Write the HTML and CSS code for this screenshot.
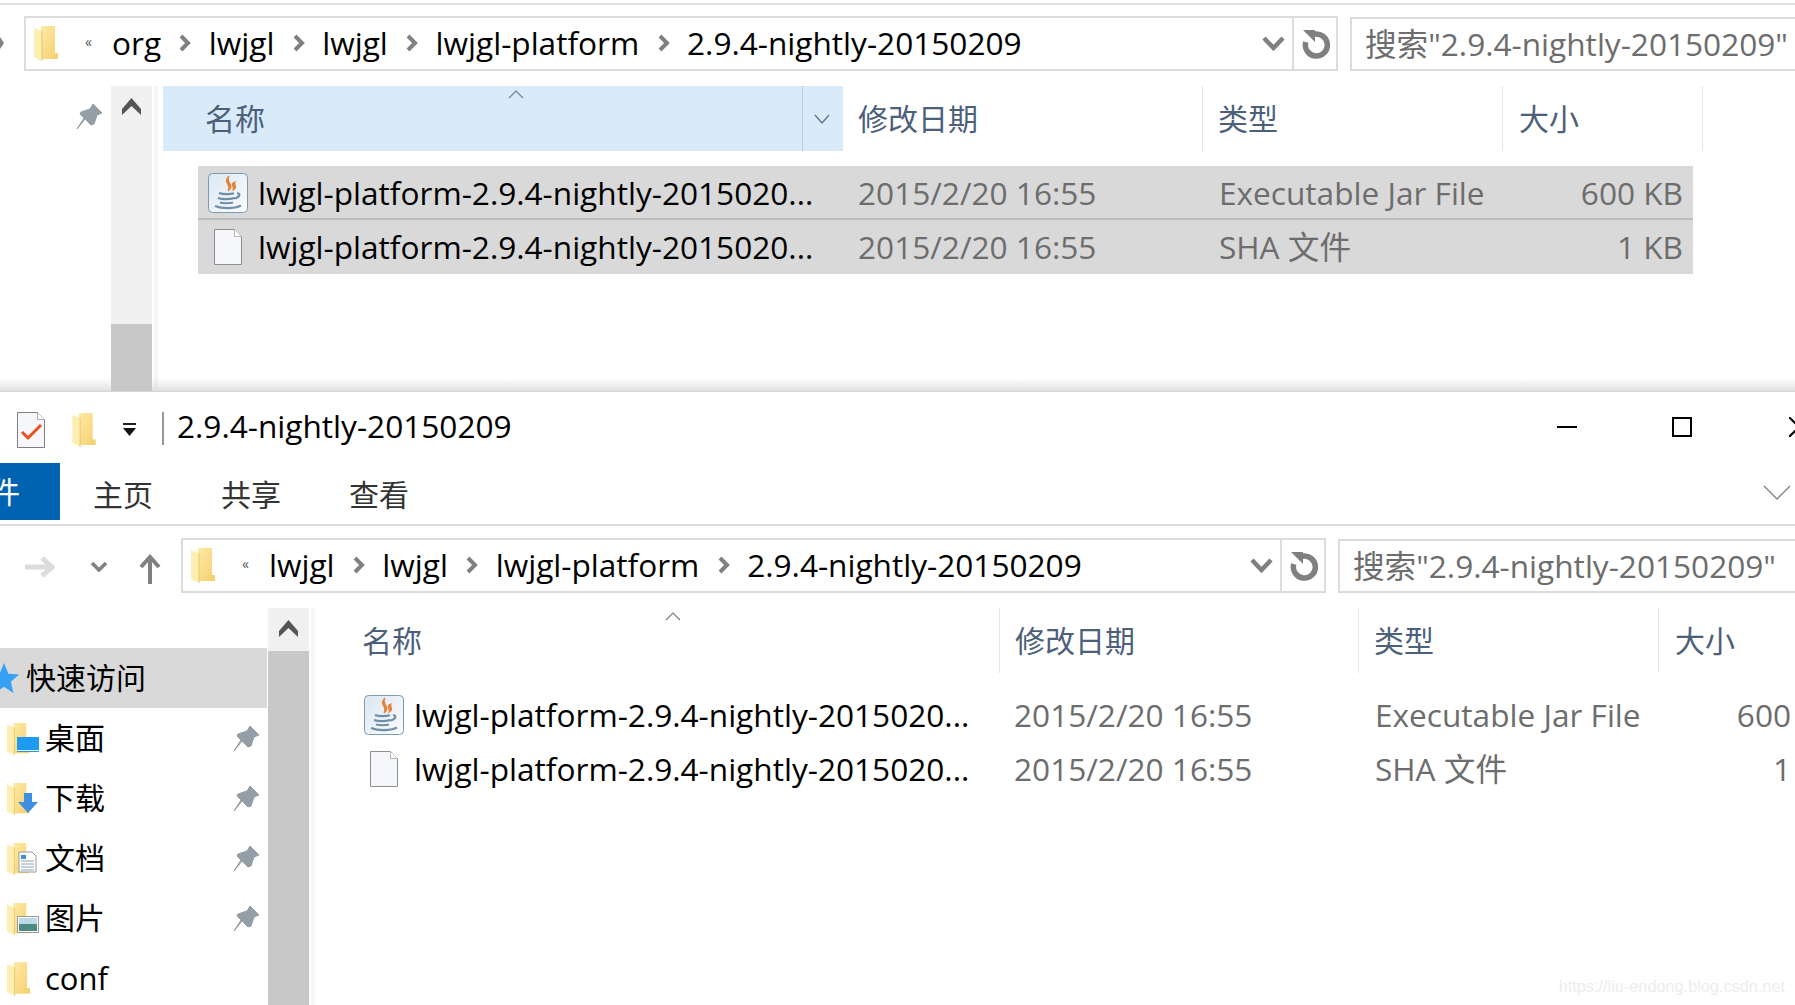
FILE: index.html
```html
<!DOCTYPE html>
<html lang="zh">
<head>
<meta charset="utf-8">
<title>2.9.4-nightly-20150209</title>
<link rel="stylesheet" href="styles.css">
</head>
<body>
<svg class="defs" width="0" height="0" aria-hidden="true">
  <defs>
    <linearGradient id="fg" x1="0" y1="0" x2="1" y2="1"><stop offset="0" stop-color="#ffe9a6"/><stop offset="1" stop-color="#f4d06f"/></linearGradient>
    <linearGradient id="jg" x1="0" y1="0" x2="1" y2="1"><stop offset="0" stop-color="#dbe7f2"/><stop offset="1" stop-color="#fbfcfe"/></linearGradient>
    <symbol id="folder" viewBox="0 0 24 35">
      <path d="M7 0h14v27h3v6H7z" fill="url(#fg)"/>
      <path d="M0 2l8 3v30l-8-4z" fill="#fdeeb2"/>
      <path d="M8 5v30" stroke="#e9c866" stroke-width="1"/>
    </symbol>
    <symbol id="pin" viewBox="0 0 26 26">
      <path d="M17 0l9 9-5 2-3 9-3 1-6-6-8 10 7-11-4-4 1-2 9-3z" fill="#939ea6" stroke="#939ea6" stroke-width="1"/>
    </symbol>
    <symbol id="crumb" viewBox="0 0 13 18">
      <path d="M3 2l7 7-7 7" fill="none" stroke="#808080" stroke-width="4"/>
    </symbol>
    <symbol id="drop" viewBox="0 0 23 15">
      <path d="M2 2l9.500 10L21 2" fill="none" stroke="#808080" stroke-width="4.500"/>
    </symbol>
    <symbol id="refresh" viewBox="0 0 29 30">
      <path d="M12 5.300A11 11 0 1 1 3.800 13" fill="none" stroke="#808080" stroke-width="5.500"/>
      <path d="M1 1h12v12z" fill="#808080"/>
    </symbol>
    <symbol id="scrollup" viewBox="0 0 19 17">
      <path d="M9.500 0L19 11v6l-9.500-9L0 17v-6z" fill="#555"/>
    </symbol>
    <symbol id="java" viewBox="0 0 40 40">
      <rect x=".5" y=".5" width="39" height="39" rx="4" fill="url(#jg)" stroke="#7f99ae"/>
      <path d="M21 3c-7 7 3 8-1 15 8-6-3-8 1-15zM27 9c-6 2 0 5-2 8 6-3 0-5 2-8z" fill="#e4843a" stroke="#e4843a" stroke-width="1.200"/>
      <path d="M11 20c4 1.500 11 1.500 15 .3M29 20.500c4-.8 3 4-3 5M10 25c4 1.500 12 1.500 16 0M12 29.500c3 1 10 1 13 0M7 33c7 3 19 3 26-.5" fill="none" stroke="#6f8fa8" stroke-width="2.200"/>
    </symbol>
    <symbol id="doc" viewBox="0 0 28 36">
      <path d="M.5.5h20l7 7v28H.5z" fill="#f5f7fa" stroke="#8e8e8e"/>
      <path d="M20.500.5v7h7" fill="#fff" stroke="#b5b5b5"/>
    </symbol>
  </defs>
</svg>

<section class="win win-top">
  <div class="topline"></div>
  <svg class="cut-arrow" viewBox="0 0 5 14"><path d="M0 1l4 6-4 6z" fill="#808080"/></svg>
  <div class="pathrow pathrow-top">
    <div class="addr addr-top">
      <svg class="ic-folder"><use href="#folder"/></svg>
      <span class="quote">«</span>
      <span class="seg seg-org">org</span><svg class="crumb"><use href="#crumb"/></svg>
      <span class="seg seg-l1">lwjgl</span><svg class="crumb"><use href="#crumb"/></svg>
      <span class="seg seg-l2">lwjgl</span><svg class="crumb"><use href="#crumb"/></svg>
      <span class="seg seg-lp">lwjgl-platform</span><svg class="crumb"><use href="#crumb"/></svg>
      <span class="seg">2.9.4-nightly-20150209</span>
      <svg class="drop"><use href="#drop"/></svg>
      <div class="refresh"><svg><use href="#refresh"/></svg></div>
    </div>
    <div class="search">搜索"2.9.4-nightly-20150209"</div>
  </div>
  <div class="pane pane-top">
    <div class="pincol"><svg class="pin"><use href="#pin"/></svg></div>
    <div class="scroll scroll-top"><svg class="scrollup"><use href="#scrollup"/></svg><div class="thumb"></div></div>
    <div class="edge"></div>
    <div class="list list-top">
      <div class="hdr">
        <div class="hc hc-name hot"><span>名称</span><svg class="caret" viewBox="0 0 16 9"><path d="M1 8l7-7 7 7" fill="none" stroke="#6f7f8f" stroke-width="1.200"/></svg></div>
        <div class="hc hc-drop hot"><svg class="hdrop" viewBox="0 0 16 10"><path d="M1 1l7 8 7-8" fill="none" stroke="#5f7286" stroke-width="1.200"/></svg></div>
        <div class="hc hc-date"><span>修改日期</span></div>
        <div class="hc hc-type"><span>类型</span></div>
        <div class="hc hc-size"><span>大小</span></div>
      </div>
      <div class="rows sel">
        <div class="row"><div class="r-name"><span class="r-ic"><svg class="java"><use href="#java"/></svg></span>lwjgl-platform-2.9.4-nightly-2015020...</div><div class="r-date">2015/2/20 16:55</div><div class="r-type">Executable Jar File</div><div class="r-size">600 KB</div></div>
        <div class="row"><div class="r-name"><span class="r-ic"><svg class="doc"><use href="#doc"/></svg></span>lwjgl-platform-2.9.4-nightly-2015020...</div><div class="r-date">2015/2/20 16:55</div><div class="r-type">SHA 文件</div><div class="r-size">1 KB</div></div>
      </div>
    </div>
  </div>
  <div class="shade"></div>
</section>

<section class="win win-bot">
  <div class="titlebar">
    <svg class="qa-check" viewBox="0 0 28 36"><path d="M.5.5h20l7 7v28H.5z" fill="#f5f7fa" stroke="#808080"/><path d="M20.500.5v7h7" fill="#fff" stroke="#aaa"/><path d="M5 20l6 6L24 13" fill="none" stroke="#e8501e" stroke-width="3"/></svg>
    <svg class="qa-folder"><use href="#folder"/></svg>
    <svg class="qa-drop" viewBox="0 0 13 13"><path d="M0 0h13v2H0z" fill="#222"/><path d="M0 5h13l-6.500 8z" fill="#111"/></svg>
    <div class="qa-sep"></div>
    <div class="title">2.9.4-nightly-20150209</div>
    <div class="winbtns">
      <div class="b-min"></div>
      <div class="b-max"></div>
      <svg class="b-close" viewBox="0 0 20 20"><path d="M0 0l20 20M20 0L0 20" stroke="#000" stroke-width="2"/></svg>
    </div>
  </div>
  <div class="ribbon">
    <div class="tab-file"><span>文件</span></div>
    <div class="tab">主页</div>
    <div class="tab">共享</div>
    <div class="tab">查看</div>
    <svg class="rib-chev" viewBox="0 0 28 15"><path d="M1 1l13 13L27 1" fill="none" stroke="#8a8a8a" stroke-width="1.500"/></svg>
  </div>
  <div class="pathrow pathrow-bot">
    <svg class="nav-back" viewBox="0 0 30 22"><path d="M0 11h26M17 2l10 9-10 9" fill="none" stroke="#dcdcdc" stroke-width="5"/></svg>
    <svg class="nav-down" viewBox="0 0 18 11"><path d="M2 2l7 7 7-7" fill="none" stroke="#808080" stroke-width="3.500"/></svg>
    <svg class="nav-up" viewBox="0 0 22 30"><path d="M11 30V4M2 13l9-10 9 10" fill="none" stroke="#808080" stroke-width="4"/></svg>
    <div class="addr addr-bot">
      <svg class="ic-folder"><use href="#folder"/></svg>
      <span class="quote">«</span>
      <span class="seg seg-l1">lwjgl</span><svg class="crumb"><use href="#crumb"/></svg>
      <span class="seg seg-l2">lwjgl</span><svg class="crumb"><use href="#crumb"/></svg>
      <span class="seg seg-lp">lwjgl-platform</span><svg class="crumb"><use href="#crumb"/></svg>
      <span class="seg">2.9.4-nightly-20150209</span>
      <svg class="drop"><use href="#drop"/></svg>
      <div class="refresh"><svg><use href="#refresh"/></svg></div>
    </div>
    <div class="search">搜索"2.9.4-nightly-20150209"</div>
  </div>
  <div class="pane pane-bot">
    <nav class="side">
      <div class="nav-item quick"><svg class="star" viewBox="0 0 24 24"><path d="M12 0l3.500 8.500 8.500.7-6.500 5.800 2 9L12 19l-7.500 5 2-9L0 9.200l8.500-.7z" fill="#35a0f4"/></svg>快速访问</div>
      <div class="nav-item">
        <svg class="side-ic" viewBox="0 0 34 36"><use href="#folder" width="22" height="34" x="0" y="0"/><rect x="10" y="15" width="22" height="15" fill="#1e9bf0"/><rect x="10" y="28" width="22" height="1" fill="#fff"/></svg>
        <span class="nav-label">桌面</span><svg class="pin"><use href="#pin"/></svg>
      </div>
      <div class="nav-item">
        <svg class="side-ic" viewBox="0 0 34 36"><use href="#folder" width="22" height="34" x="0" y="0"/><path d="M17 11h8v9h6L21 31 11 20h6z" fill="#3e8fe0"/></svg>
        <span class="nav-label">下载</span><svg class="pin"><use href="#pin"/></svg>
      </div>
      <div class="nav-item">
        <svg class="side-ic" viewBox="0 0 34 36"><use href="#folder" width="22" height="34" x="0" y="0"/><path d="M12 10h13l4 4v16H12z" fill="#fff" stroke="#9a9a9a"/><path d="M14 13h5v4h-5z" fill="#3a8fd8"/><path d="M14 19h13M14 22h13M14 25h13M14 28h13" stroke="#8aa0b5"/></svg>
        <span class="nav-label">文档</span><svg class="pin"><use href="#pin"/></svg>
      </div>
      <div class="nav-item">
        <svg class="side-ic" viewBox="0 0 34 36"><use href="#folder" width="22" height="34" x="0" y="0"/><rect x="10.500" y="14.500" width="21" height="16" fill="#fff" stroke="#9a9a9a"/><rect x="12" y="16" width="18" height="6" fill="#bcd9ea"/><rect x="12" y="22" width="18" height="7" fill="#4d8a82"/></svg>
        <span class="nav-label">图片</span><svg class="pin"><use href="#pin"/></svg>
      </div>
      <div class="nav-item">
        <svg class="side-ic" viewBox="0 0 34 36"><use href="#folder" width="23" height="34" x="0" y="0"/></svg>
        <span class="nav-label nav-latin">conf</span>
      </div>
    </nav>
    <div class="scroll scroll-bot"><svg class="scrollup"><use href="#scrollup"/></svg><div class="thumb"></div></div>
    <div class="edge"></div>
    <div class="list list-bot">
      <div class="hdr">
        <div class="hc hc-name"><span>名称</span><svg class="caret" viewBox="0 0 16 9"><path d="M1 8l7-7 7 7" fill="none" stroke="#6f7f8f" stroke-width="1.200"/></svg></div>
        <div class="hc hc-date"><span>修改日期</span></div>
        <div class="hc hc-type"><span>类型</span></div>
        <div class="hc hc-size"><span>大小</span></div>
      </div>
      <div class="rows">
        <div class="row"><div class="r-name"><span class="r-ic"><svg class="java"><use href="#java"/></svg></span>lwjgl-platform-2.9.4-nightly-2015020...</div><div class="r-date">2015/2/20 16:55</div><div class="r-type">Executable Jar File</div><div class="r-size">600 KB</div></div>
        <div class="row"><div class="r-name"><span class="r-ic"><svg class="doc"><use href="#doc"/></svg></span>lwjgl-platform-2.9.4-nightly-2015020...</div><div class="r-date">2015/2/20 16:55</div><div class="r-type">SHA 文件</div><div class="r-size">1 KB</div></div>
      </div>
    </div>
  </div>
  <div class="watermark">https://liu-endong.blog.csdn.net</div>
</section>
</body>
</html>
```
FILE: styles.css
```css
* { box-sizing: border-box; }
html, body { margin: 0; padding: 0; }
body {
  width: 1795px;
  height: 1005px;
  overflow: hidden;
  background: #fff;
  font-family: "Open Sans", "Noto Sans CJK SC", sans-serif;
  font-size: 31.6px;
  color: #000;
}
svg { display: block; flex: none; }
.defs { position: absolute; }

.win { position: relative; overflow: hidden; background: #fff; }
.win-top { height: 392px; padding-top: 3px; }
.win-bot { height: 613px; }

.topline { height: 2px; background: #e0e0e0; }
.cut-arrow { position: absolute; left: 0; top: 36px; width: 5px; height: 14px; }

/* address + search */
.pathrow { display: flex; align-items: stretch; height: 55px; }
.pathrow-top { margin: 11px 0 0 24px; }
.pathrow-bot { margin-top: 12px; padding-left: 25px; align-items: center; }
.addr {
  display: flex;
  align-items: center;
  height: 55px;
  border: 2px solid #dcdcdc;
  white-space: nowrap;
  flex: none;
}
.addr-top { width: 1314px; padding-left: 8px; }
.addr-bot { width: 1145px; padding-left: 8px; }
.ic-folder { width: 24px; height: 35px; margin-right: 27px; }
.quote { width: 9px; font-size: 14px; line-height: 1; color: #555; margin-right: 18px; margin-top: -4px; }
.seg { line-height: 40px; margin-top: -2px; }
.crumb { width: 13px; height: 18px; margin-left: 17.400px; margin-right: 17.400px; margin-top: -2px; }
.drop { width: 23px; height: 15px; margin-left: auto; margin-right: 7px; }
.refresh {
  width: 44px;
  align-self: stretch;
  border-left: 2px solid #dcdcdc;
  display: flex;
  align-items: center;
  justify-content: center;
  padding-left: 2px;
}
.refresh svg { width: 29px; height: 30px; }
.search {
  flex: none;
  width: 500px;
  height: 54px;
  margin-left: 12px;
  margin-top: 1px;
  border: 2px solid #dcdcdc;
  border-right: 0;
  padding-left: 13px;
  line-height: 50px;
  color: #6d6d6d;
  white-space: nowrap;
}

/* panes */
.pane { display: flex; align-items: stretch; }
.pane-top { margin-top: 15px; height: 306px; }
.pane-bot { margin-top: 15px; height: 397px; }

.pincol { width: 111px; padding: 18px 0 0 76px; flex: none; }
.pin { width: 26px; height: 26px; }
.scroll { width: 41px; flex: none; background: #f0f0f0; display: flex; flex-direction: column; }
.scroll .scrollup { width: 19px; height: 17px; margin: 12px auto 0; }
.scroll .thumb { background: #c8c8c8; flex: 1; }
.scroll-top .thumb { margin-top: 209px; }
.scroll-bot .thumb { margin-top: 14px; }
.edge { width: 4px; flex: none; margin: 0 0 0 2px; background: #f6f6f6; }
.list-top { margin-left: 5px; --rowm: 35px; }
.list-bot { margin-left: 0; --rowm: 39px; }
.list { flex: none; }

/* column headers */
.hdr { display: flex; height: 65px; color: #4c607a; font-size: 30px; }
.hc {
  position: relative;
  display: flex;
  align-items: center;
  flex: none;
  border-right: 1px solid #e5e5e5;
  height: 100%;
  line-height: 40px;
}
.hc span { padding-top: 1px; }
.hot { background: #d9eaf8; border-right-color: #b9cfe0; }
.hc-drop { width: 40px; border-right: 0; justify-content: center; padding-right: 3px; }
.hdrop { width: 16px; height: 10px; }
.hc-date { width: 359px; padding-left: 15px; }
.hc-type { width: 300px; padding-left: 15px; }
.hc-size { width: 200px; padding-left: 16px; }
.list-top .hc-date { width: 360px; }
.list-top .hc-name { width: 640px; padding-left: 42px; }
.list-bot .hc-name { width: 685px; padding-left: 47px; }
.caret { position: absolute; top: 4px; width: 16px; height: 9px; }
.list-top .caret { left: 345px; }
.list-bot .caret { left: 350px; }

/* file rows */
.rows { margin: 15px 0 0 var(--rowm); width: 1495px; }
.row {
  display: flex;
  align-items: center;
  height: 54px;
  padding: 0 10px;
  white-space: nowrap;
  line-height: 40px;
}
.sel { background: #d9d9d9; }
.sel .row:first-child { box-shadow: inset 0 -2px #bcbcbc; }
.r-name { display: flex; align-items: center; width: 650px; flex: none; }
.r-ic { width: 40px; margin-right: 10px; display: flex; justify-content: center; flex: none; }
.java { width: 40px; height: 40px; }
.doc { width: 28px; height: 36px; }
.r-date { width: 361px; flex: none; color: #6d6d6d; }
.r-type { flex: 1; color: #6d6d6d; }
.r-size { color: #6d6d6d; text-align: right; }

.shade {
  position: absolute;
  left: 0;
  right: 0;
  bottom: 0;
  height: 14px;
  background: linear-gradient(rgba(200,200,200,0), rgba(200,200,200,.55));
  border-bottom: 1px solid #d6d6d6;
}

/* title bar */
.titlebar { display: flex; align-items: center; height: 71px; padding-left: 17px; }
.qa-check { width: 28px; height: 36px; margin-top: 4px; }
.qa-folder { width: 24px; height: 34px; margin-left: 27px; margin-top: 4px; }
.qa-drop { width: 13px; height: 13px; margin-left: 27px; margin-top: 4px; }
.qa-sep { width: 2px; height: 33px; background: #999; margin-left: 26px; margin-top: 2px; }
.title { margin-left: 13px; margin-top: -4px; white-space: nowrap; }
.winbtns { display: flex; align-items: center; margin-left: auto; margin-top: -2px; }
.b-min { width: 20px; height: 2px; background: #000; }
.b-max { width: 20px; height: 20px; border: 2px solid #000; margin-left: 95px; }
.b-close { width: 20px; height: 20px; margin-left: 97px; margin-right: -14px; }

/* ribbon */
.ribbon {
  display: flex;
  align-items: flex-start;
  height: 63px;
  border-bottom: 2px solid #dcdcdc;
  color: #333;
  font-size: 30px;
}
.tab-file {
  width: 60px;
  height: 57px;
  background: #0063b1;
  color: #fff;
  overflow: hidden;
  display: flex;
  justify-content: flex-end;
  line-height: 57px;
  white-space: nowrap;
  padding-right: 40px;
  flex: none;
}
.tab-file span { flex: none; }
.tab { width: 60px; margin-left: 33px; line-height: 63px; flex: none; }
.tab + .tab { margin-left: 68px; }
.rib-chev { width: 28px; height: 15px; margin: 22px 4px 0 auto; }

.nav-back { width: 30px; height: 22px; margin-top: 2px; }
.nav-down { width: 18px; height: 11px; margin-left: 35px; margin-top: 2px; }
.nav-up { width: 22px; height: 30px; margin-left: 31px; margin-top: 6px; }
.addr-bot { margin-left: 20px; }
.pathrow-bot .search { margin-top: 1px; }

/* sidebar */
.side { width: 268px; padding-top: 40px; flex: none; font-size: 30px; }
.nav-item { display: flex; align-items: center; height: 60px; padding: 0 9px 0 7px; white-space: nowrap; }
.quick { background: #d9d9d9; padding: 0 0 4px 26px; position: relative; width: 267px; }
.star { position: absolute; left: -11px; top: 15px; width: 30px; height: 30px; }
.side-ic { width: 34px; height: 36px; margin-right: 4px; margin-top: 4px; }
.nav-label { flex: 1; line-height: 40px; margin-top: -1px; }
.nav-latin { font-size: 31px; }
.nav-item .pin { margin-top: 1px; }

.watermark {
  position: absolute;
  right: 10px;
  bottom: 9px;
  font-family: "Liberation Sans", sans-serif;
  font-size: 16.300px;
  line-height: 20px;
  color: #ededed;
}
```
